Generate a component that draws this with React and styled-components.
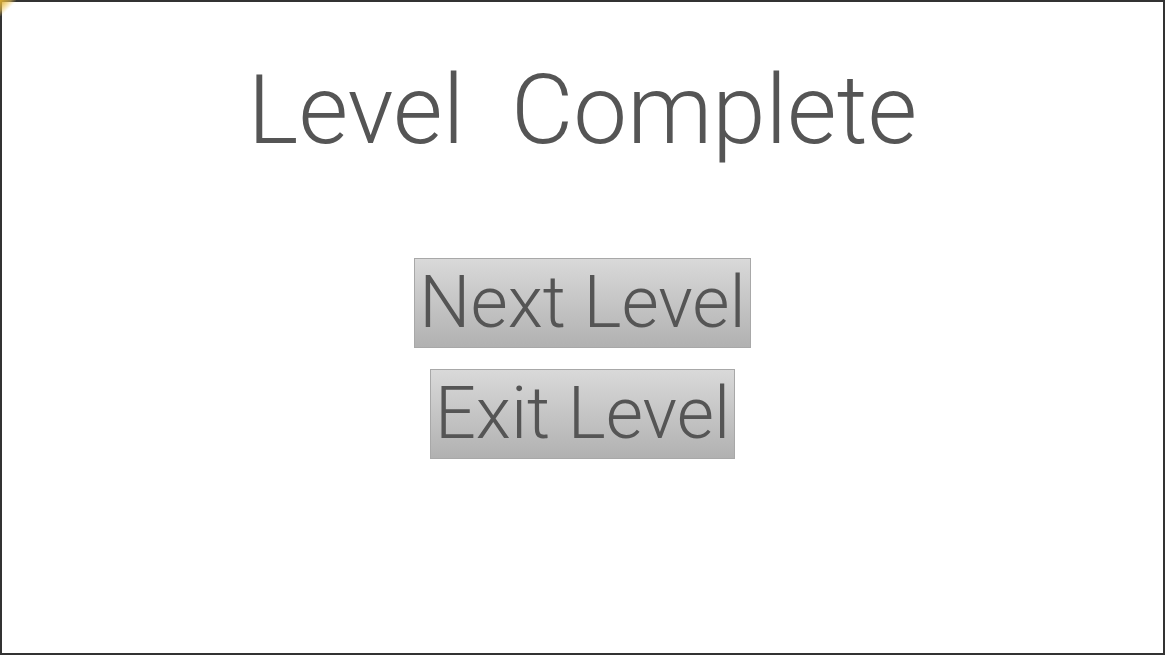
import React from "react";
import styled, { createGlobalStyle } from "styled-components";

const Global = createGlobalStyle`
  html, body {
    margin: 0;
    padding: 0;
    background: #ffffff;
  }
`;

const Frame = styled.div`
  position: relative;
  box-sizing: border-box;
  width: 1165px;
  height: 655px;
  border: 2px solid #333333;
  background: #ffffff;
  display: flex;
  flex-direction: column;
  align-items: center;
  font-family: Roboto, "Liberation Sans", sans-serif;
  font-weight: 300;
  color: #555555;
`;

// little yellow fold in the top-left corner
const Corner = styled.div`
  position: absolute;
  top: -2px;
  left: -2px;
  width: 16px;
  height: 16px;
  background: linear-gradient(135deg, #d9a92a 0%, rgba(240, 200, 90, 0.55) 35%, rgba(255, 255, 255, 0) 55%);
`;

const Title = styled.h1`
  margin: 54px 0 0;
  font-size: 96px;
  font-weight: 300;
  line-height: 108px;
  white-space: pre;
`;

const Menu = styled.div`
  margin-top: 94px;
  display: flex;
  flex-direction: column;
  align-items: center;
  gap: 21px;
`;

const MenuButton = styled.button`
  box-sizing: border-box;
  height: 90px;
  padding: 0 4px;
  border: 1px solid #a8a8a8;
  background: linear-gradient(#d9d9d9, #b1b1b1);
  font-family: inherit;
  font-weight: 300;
  font-size: 72px;
  line-height: 88px;
  color: #555555;
  cursor: pointer;
`;

export default function App() {
  return (
    <>
      <Global />
      <Frame>
        <Corner />
        <Title>{"Level  Complete"}</Title>
        <Menu>
          <MenuButton>Next Level</MenuButton>
          <MenuButton>Exit Level</MenuButton>
        </Menu>
      </Frame>
    </>
  );
}
